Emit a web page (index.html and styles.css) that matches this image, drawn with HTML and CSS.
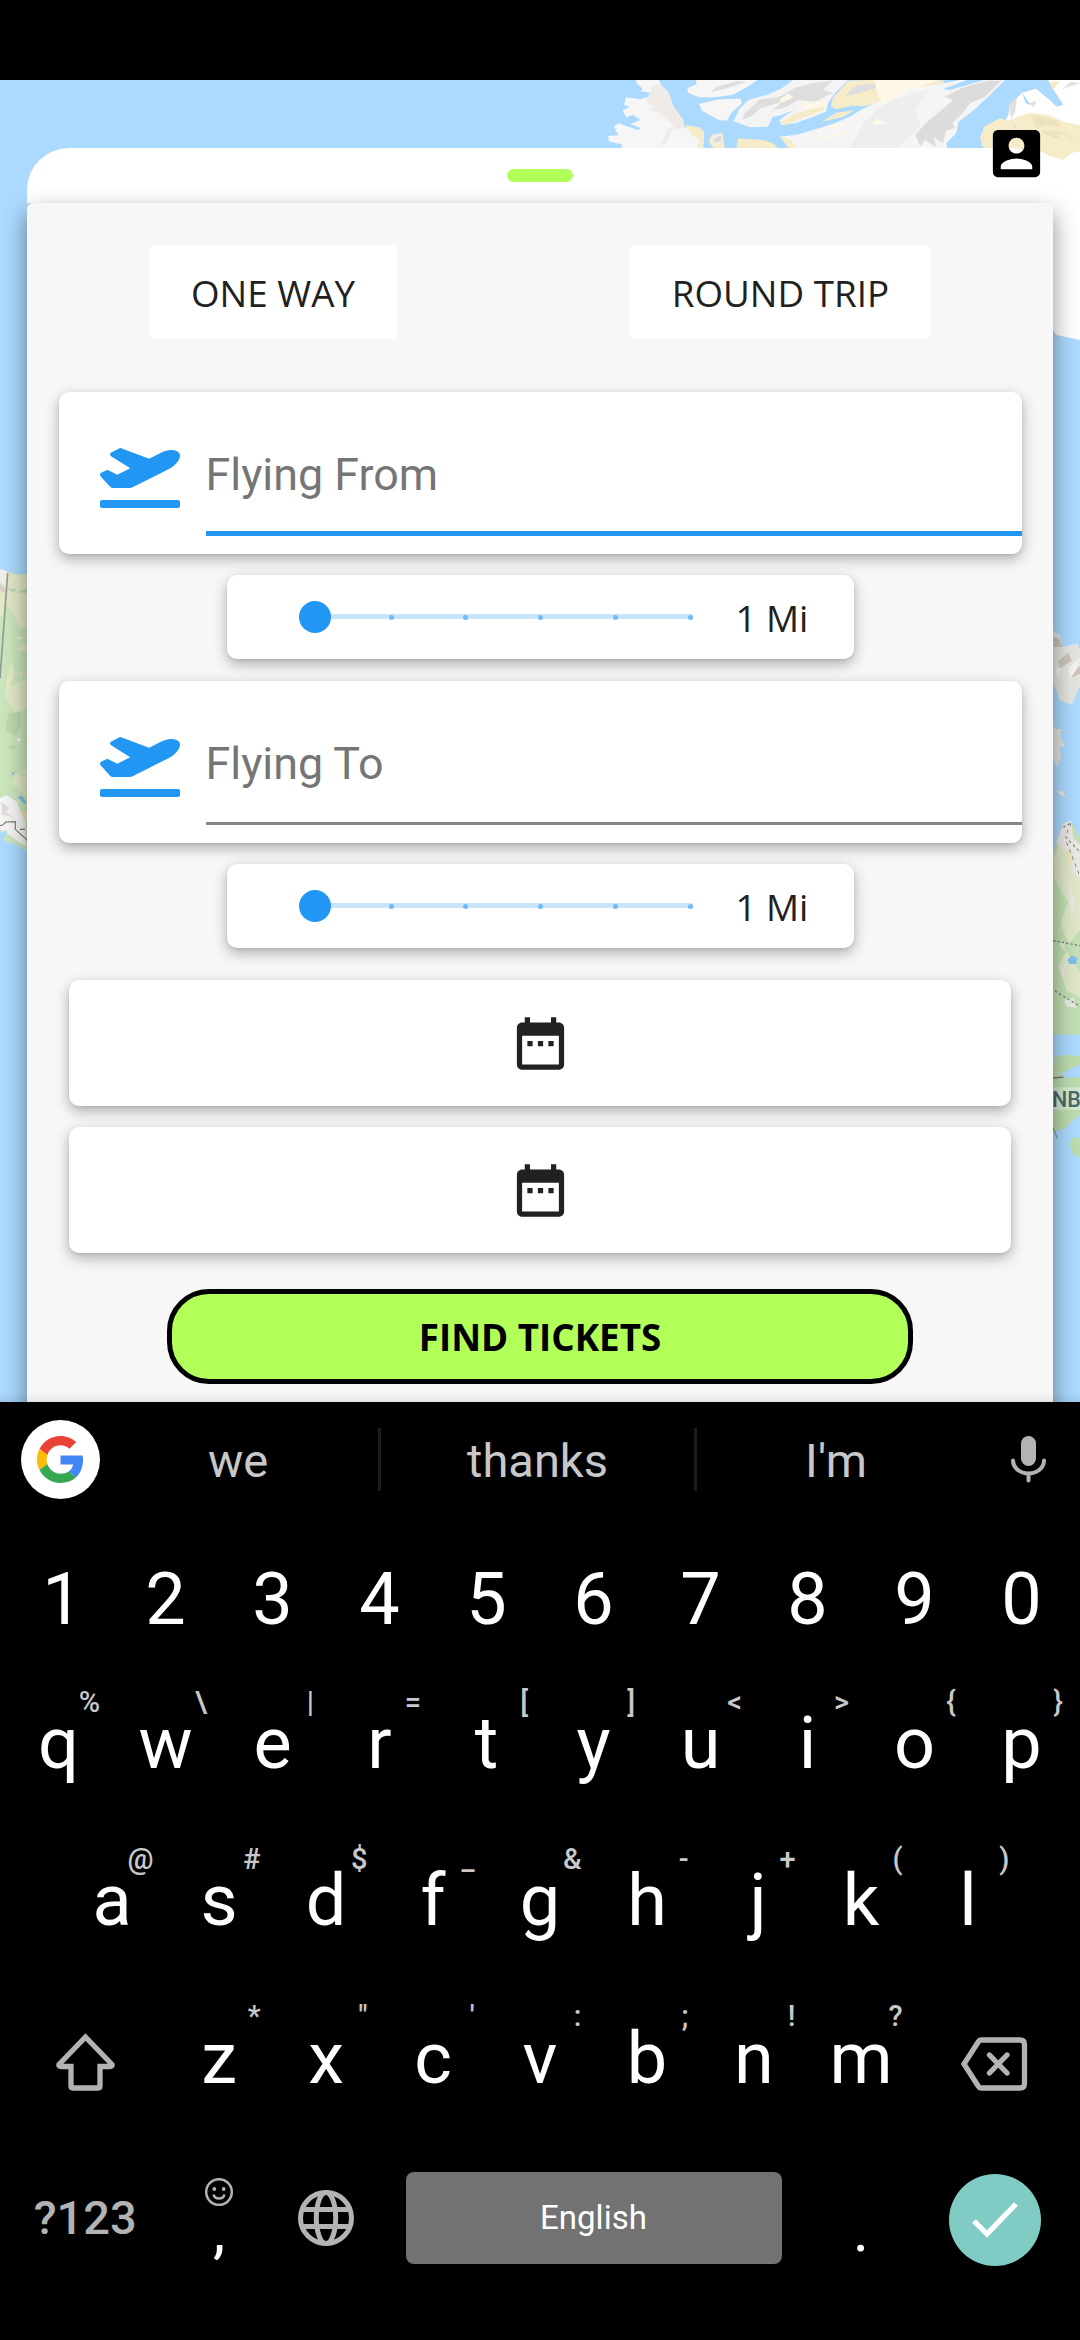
FILE: index.html
```html
<!DOCTYPE html>
<html lang="en">
<head>
<meta charset="utf-8">
<title>Flight search</title>
<link rel="stylesheet" href="styles.css">
</head>
<body>
<div class="screen">
  <div class="status-bar"></div>
  <main class="app">
    <svg class="map" viewBox="0 80 1080 1322" aria-hidden="true">
      <rect y="80" width="1080" height="1322" fill="#acdaff"/>
      <!-- northern islands -->
      <g transform="translate(540 60) scale(.34439 .33333)">
        <path fill="#f6f6f6" d="M280 60L345 60L352 78L372 95L388 140L416 180L418 200L440 212L462 202L476 215L474 264L234 264L240 254L200 244L198 228L228 226L215 200L228 190L285 210L292 204L262 192L292 180L270 165L250 172L240 150L262 142L244 134L250 112L290 118L325 108L322 98L292 94L298 86L280 70Z"/>
        <path fill="#efebe6" d="M325 78L350 72L374 98L388 140L416 180V202L400 210L370 180L342 155L316 150L330 140L308 126Z"/>
        <path fill="#efebe6" d="M370 205L388 200L366 250L352 256Z"/>
        <path fill="#f6ecca" d="M420 195L462 202L476 215L470 264L456 262L462 240L440 225Z"/>
        <path fill="#f6f6f6" d="M452 60H632L600 82L560 104L510 112H462L430 98L428 85L455 72Z"/>
        <path fill="#dedede" d="M510 82L575 62L600 66L545 84L498 96Z"/>
        <path fill="#f6f6f6" d="M462 132L520 118L582 116L586 130L556 158L543 182L520 180L470 152Z"/>
        <path fill="#f4f4f4" d="M562 184L580 145L605 120L660 104L700 86L735 60H895L860 95L838 125L830 155L790 172L740 190L700 195L696 180L716 164L740 150L700 165L675 172L662 200L610 202Z"/>
        <path fill="#dedede" d="M596 158L640 118L690 112L740 84L790 70L850 62L820 90L850 98L800 125L752 120L706 145L680 148L664 160L705 125L640 145L612 170L585 180Z"/>
        <path fill="#fff8e8" d="M695 120L720 100L735 112L700 130Z M760 130L836 122L826 140L766 148Z"/>
        <path fill="#f6ecca" d="M700 185L740 160L800 145L828 138L820 152L770 172L710 196Z M845 140L850 115L895 62L960 60H1140L1175 62L1160 85L1110 90L1050 98L985 130L940 138L905 137L860 148Z"/>
        <path fill="#dedede" d="M900 90L925 75L958 72L1010 66L980 82L930 98L890 108Z"/>
        <path fill="#f5f5f5" d="M696 230L745 224L800 208L850 192L900 170L940 145L990 122L1040 98L1110 80L1175 70L1220 60H1350L1300 112L1260 150L1216 185L1208 220L1180 250L1182 264H745L726 256Z"/>
        <path fill="#eee" d="M900 260L940 190L1000 130L1070 105L1130 90L1090 150L1105 200L1065 235L1040 264H880Z"/>
        <path fill="#fff8e8" d="M970 60H1160L1060 96L1000 134L985 118Z M800 235L900 212L860 235Z M975 177L1010 190L962 194Z M840 196L890 190L850 210Z"/>
        <path fill="#dcdcdc" d="M1090 225L1120 190L1155 160L1200 120L1175 110L1230 82L1300 62H1340L1290 112L1250 128L1230 155L1198 188L1204 205L1180 212L1170 250L1142 230L1150 262L1120 240L1104 258Z"/>
        <path fill="#f6ecca" d="M818 185L860 158L915 150L880 170Z M575 235L650 240L680 252L690 264H570Z M498 225L530 218L536 264H504L490 245Z M696 230L730 240L745 264H722Z"/>
        <path fill="#eee" d="M500 228L526 222L530 246L508 256Z"/>
        <path fill="#d5d5d5" d="M506 238L526 226V240L510 248Z"/>
        <path fill="#fff" d="M1310 264L1360 165L1365 135L1400 98L1440 86L1480 120L1500 140L1520 135L1495 95L1475 60H1568V840L1500 825L1480 800H1400V264Z"/>
        <path fill="#f6ecca" d="M1478 66L1510 62L1490 90Z M1278 232L1290 200L1335 175L1360 182L1420 158L1480 165L1520 185L1568 196V275L1545 278L1520 300L1480 288L1455 275H1310L1284 258Z"/>
        <path fill="#ece2be" d="M1428 165L1500 180L1515 202L1470 195L1442 205Z M1460 210L1530 218L1500 225L1520 242L1464 222Z"/>
        <path fill="#e3dfdc" d="M1360 135L1385 112L1380 155L1365 180L1385 200L1375 205Z M1418 130L1442 122L1435 142Z M1515 90L1540 65L1568 70L1530 82Z"/>
        <path fill="#acdaff" d="M1400 98L1425 135L1410 130Z"/>
        <path fill="#e9ecb9" d="M1510 215L1560 235L1535 240Z M785 148L802 152L790 158Z"/>
        <path fill="#acdaff" d="M1168 88L1240 60H1290L1240 75L1190 90Z"/>
      </g>
      <!-- west coast -->
      <g transform="translate(0 500) scale(.33333)">
        <path fill="#cbe6bd" d="M0 206L36 220L50 224L90 222V1058L40 1028L0 1045Z"/>
        <path fill="#e3eac8" d="M0 206L36 220L50 224L90 222V380L60 386L40 340L20 316L10 350L0 345Z M50 450L70 430L90 438V455Z M20 540L34 480L44 520L30 560L90 530V625L45 636L15 590Z M34 850L50 820L90 835V920L70 880Z M62 820L78 802L90 810V825Z"/>
        <path fill="#eee" d="M0 206L20 214L18 262L0 240Z M45 415L60 410L72 418Z"/>
        <path fill="#d8d2ca" d="M0 252L16 264L14 280L0 272Z"/>
        <path fill="#bddbb0" d="M18 265L50 266L40 278Z M50 276L90 262V280Z M25 740L40 735L52 745L30 748Z M25 640L62 636L64 670L48 710L16 690Z"/>
        <path fill="#f4dfbd" d="M56 535L62 512L72 525Z M62 930L90 935V962L75 960Z"/>
        <path fill="#f7f5f4" d="M0 895L18 885L50 905L60 930L76 965V1038L55 1025L22 1000L0 990Z M48 718L64 714L58 726Z"/>
        <path fill="#e0dcdf" d="M4 905L28 925L18 935L40 950L6 945Z"/>
        <path fill="#7dbcf1" d="M52 890L66 888L78 905L74 912Z M34 822L44 812L40 826Z"/>
        <path fill="#acdaff" d="M0 998L22 990L10 1020L50 1042L90 1060V1200H0Z"/>
        <path fill="none" stroke="#999" stroke-width="5" d="M23 219L0 535"/>
        <path fill="none" stroke="#6d7e6d" stroke-width="3.5" d="M0 977L8 975L18 966L46 965V988L90 1028 M60 988H75"/>
      </g>
      <!-- east coast -->
      <g transform="translate(1000 300) scale(.33333 .70791)">
        <path fill="#e5e5e0" d="M150 465L178 472L190 490L232 485L240 495V545L215 572L180 565L150 530Z M150 592L166 606H185L180 615L194 630L178 632L184 645L172 660L150 640Z M168 693L190 694L196 702L182 700Z"/>
        <path fill="#cdc4bd" d="M160 476L178 478L188 490L162 490Z M175 510L205 498L215 510L180 520Z M208 522L240 518V528L214 534Z"/>
        <path fill="#f3f3f1" d="M165 520L185 520L172 535Z M205 520L240 505L232 520L210 536Z"/>
        <path fill="#c2e0b4" d="M150 790L180 758L214 736L240 760V1038H150Z"/>
        <path fill="#e0e7c8" d="M160 790L190 750L240 775V890L205 910L182 880L205 850L165 820Z M175 940L200 920L240 950V985L200 975Z"/>
        <path fill="#e9e8e2" d="M168 766L190 740L214 735L220 760L240 770V820L215 805L205 780Z M205 820L225 850L215 880Z M180 945L196 938L190 960Z M178 910L190 905L196 920Z M192 990L220 985L230 1000L200 998Z"/>
        <path fill="#f0e2bb" d="M200 775L222 788L210 798Z"/>
        <path fill="#7dbcf1" d="M203 932L215 926L232 930L228 938L208 938Z"/>
        <path fill="none" stroke="#777" stroke-width="2" stroke-dasharray="6 7" d="M190 745L214 738L196 758L240 780 M200 766L240 815 M160 905L240 912 M165 976L240 998"/>
        <path fill="#acdaff" d="M150 1038H240V1068L150 1068Z"/>
        <path fill="#bcdcae" d="M150 1072L190 1066L240 1068V1150L195 1170L150 1176Z M208 1192L222 1182L240 1185V1212L218 1206Z"/>
        <path fill="#acdaff" d="M185 1092L240 1080V1098L195 1099Z"/>
        <path fill="none" stroke="#777" stroke-width="2" d="M150 1099L190 1098 M160 1170L172 1184"/>
        <path fill="#dfeede" opacity=".7" d="M160 1112H240V1144H160Z"/>
      </g>
      <text class="map-label" x="1052" y="1107">NB</text>
    </svg>

    <section class="sheet">
      <div class="sheet-top"><span class="handle"></span></div>
      <div class="panel">
        <div class="trip-types">
          <button class="trip">ONE WAY</button>
          <button class="trip">ROUND TRIP</button>
        </div>

        <label class="card field">
          <svg class="plane" viewBox="0 0 640 512"><use href="#plane-shape"/></svg>
          <span class="input focused">Flying From</span>
        </label>
        <div class="card range">
          <div class="slider"><i class="track"></i><i class="thumb"></i><i class="tick"></i><i class="tick"></i><i class="tick"></i><i class="tick"></i><i class="tick"></i></div>
          <span class="miles">1 Mi</span>
        </div>

        <label class="card field">
          <svg class="plane" viewBox="0 0 640 512"><use href="#plane-shape"/></svg>
          <span class="input">Flying To</span>
        </label>
        <div class="card range">
          <div class="slider"><i class="track"></i><i class="thumb"></i><i class="tick"></i><i class="tick"></i><i class="tick"></i><i class="tick"></i><i class="tick"></i></div>
          <span class="miles">1 Mi</span>
        </div>

        <div class="card date"><svg class="icon" viewBox="0 0 24 24"><use href="#calendar-shape"/></svg></div>
        <div class="card date"><svg class="icon" viewBox="0 0 24 24"><use href="#calendar-shape"/></svg></div>

        <button class="find">FIND TICKETS</button>
      </div>
    </section>

    <svg class="account" viewBox="0 0 24 24"><path d="M3 5v14c0 1.1.89 2 2 2h14c1.1 0 2-.9 2-2V5c0-1.1-.9-2-2-2H5c-1.11 0-2 .9-2 2zm12 4c0 1.66-1.34 3-3 3s-3-1.34-3-3 1.34-3 3-3 3 1.34 3 3zm-9 8c0-2 4-3.1 6-3.1s6 1.1 6 3.1v1H6v-1z"/></svg>
    <div class="edge-shade"></div>
  </main>

  <section class="keyboard">
    <div class="suggestions">
      <span class="google"><svg viewBox="0 0 48 48">
        <path fill="#ea4335" d="M24 9.5c3.54 0 6.71 1.22 9.21 3.6l6.85-6.85C35.9 2.38 30.47 0 24 0 14.62 0 6.51 5.38 2.56 13.22l7.98 6.19C12.43 13.72 17.74 9.5 24 9.5z"/>
        <path fill="#4285f4" d="M46.98 24.55c0-1.57-.15-3.09-.38-4.55H24v9.02h12.94c-.58 2.96-2.26 5.48-4.78 7.18l7.73 6c4.51-4.18 7.09-10.36 7.09-17.65z"/>
        <path fill="#fbbc05" d="M10.53 28.59c-.48-1.45-.76-2.99-.76-4.59s.27-3.14.76-4.59l-7.98-6.19C.92 16.46 0 20.12 0 24c0 3.88.92 7.54 2.56 10.78l7.97-6.19z"/>
        <path fill="#34a853" d="M24 48c6.48 0 11.93-2.13 15.89-5.81l-7.73-6c-2.15 1.45-4.92 2.3-8.16 2.3-6.26 0-11.57-4.22-13.47-9.91l-7.98 6.19C6.51 42.62 14.62 48 24 48z"/>
      </svg></span>
      <span class="word">we</span><span class="word">thanks</span><span class="word">I'm</span>
      <svg class="mic" viewBox="0 0 35 47"><rect x="10" width="15" height="30" rx="7.5" fill="#b3b3b3"/><path d="M2 24.500C2 32 9 37.500 17.500 37.500S33 32 33 24.500M17.500 38V44.500" fill="none" stroke="#b3b3b3" stroke-width="4" stroke-linecap="round"/></svg>
    </div>

    <div class="row numbers"><span class="key nudge">1</span><span class="key">2</span><span class="key">3</span><span class="key">4</span><span class="key">5</span><span class="key">6</span><span class="key">7</span><span class="key">8</span><span class="key">9</span><span class="key">0</span></div>
    <div class="row">
      <span class="key">q<sup>%</sup></span><span class="key">w<sup>\</sup></span><span class="key">e<sup>|</sup></span><span class="key">r<sup>=</sup></span><span class="key">t<sup>[</sup></span><span class="key">y<sup>]</sup></span><span class="key">u<sup>&lt;</sup></span><span class="key">i<sup>&gt;</sup></span><span class="key">o<sup>{</sup></span><span class="key">p<sup>}</sup></span>
    </div>
    <div class="row">
      <span class="key">a<sup>@</sup></span><span class="key">s<sup>#</sup></span><span class="key">d<sup>$</sup></span><span class="key">f<sup>_</sup></span><span class="key">g<sup>&amp;</sup></span><span class="key">h<sup>-</sup></span><span class="key nudge">j<sup>+</sup></span><span class="key">k<sup>(</sup></span><span class="key">l<sup>)</sup></span>
    </div>
    <div class="row lower">
      <span class="key wide"><svg class="shift" viewBox="0 0 59 58"><path d="M29.500 4L56 31.500Q56.500 33.500 54 33.500H44V53Q44 55 42 55H17Q15 55 15 53V33.500H5Q2.500 33.500 3 31.500Z"/></svg></span>
      <span class="key">z<sup>*</sup></span><span class="key">x<sup>"</sup></span><span class="key">c<sup>'</sup></span><span class="key">v<sup>:</sup></span><span class="key">b<sup>;</sup></span><span class="key">n<sup>!</sup></span><span class="key">m<sup>?</sup></span>
      <span class="key wide"><svg class="erase" viewBox="0 0 67 54"><path d="M20 3H59Q63.500 3 63.500 7.500V46.500Q63.500 51 59 51H20Q18.500 51 17.500 49.500L3 27L17.500 4.500Q18.500 3 20 3ZM28.500 18L46 36M46 18L28.500 36"/></svg></span>
    </div>
    <div class="row bottom">
      <span class="key wide mode">?123</span>
      <span class="key comma"><svg viewBox="0 0 28 28"><circle cx="14" cy="14" r="12.800"/><path d="M8.500 16.500Q9.500 20.500 14 20.500T19.500 16.500"/><circle class="eye" cx="9.300" cy="11" r="1.900"/><circle class="eye" cx="18.700" cy="11" r="1.900"/></svg><b>,</b></span>
      <span class="key"><svg class="globe" viewBox="0 0 56 56"><circle cx="28" cy="28" r="25.500"/><ellipse cx="28" cy="28" rx="9.700" ry="25.500"/><path d="M5 19.500H51M5 36.500H51"/></svg></span>
      <span class="space">English</span>
      <span class="key dot">.</span>
      <span class="key wide"><span class="enter"><svg viewBox="0 0 46 36"><path d="M2 19L15 32L44 2"/></svg></span></span>
    </div>
  </section>
</div>

<svg width="0" height="0" class="defs"><defs>
  <path id="plane-shape" d="M624 448H16c-8.840 0-16 7.160-16 16v32c0 8.840 7.160 16 16 16h608c8.840 0 16-7.160 16-16v-32c0-8.840-7.160-16-16-16zM80.550 341.270c6.280 6.840 15.100 10.720 24.330 10.710l130.540-.18a65.620 65.620 0 0 0 29.640-7.120l290.960-147.650c26.740-13.570 50.710-32.940 67.020-58.310 18.310-28.480 20.300-49.090 13.070-63.650-7.210-14.570-24.740-25.270-58.250-27.450-29.850-1.940-59.540 5.920-86.280 19.480l-98.510 49.990-218.700-82.060a17.799 17.799 0 0 0-18-1.110L90.620 67.290c-10.670 5.410-13.250 19.650-5.170 28.530l156.220 98.100-103.210 52.380-72.350-36.470a17.804 17.804 0 0 0-16.070.02L9.910 230.220c-10.440 5.300-13.190 19.120-5.570 28.080l76.210 82.970z"/>
  <path id="calendar-shape" d="M9 11H7v2h2v-2zm4 0h-2v2h2v-2zm4 0h-2v2h2v-2zm2-7h-1V2h-2v2H8V2H6v2H5c-1.110 0-1.990.9-1.990 2L3 20c0 1.100.89 2 2 2h14c1.100 0 2-.9 2-2V6c0-1.100-.9-2-2-2zm0 16H5V9h14v11z"/>
</defs></svg>
</body>
</html>
```
FILE: styles.css
```css
* { box-sizing: border-box; }
body { margin: 0; background: #000; }
button { font: inherit; border: 0; margin: 0; }
svg { display: block; }
.defs { position: absolute; }

.screen {
  width: 1080px;
  height: 2340px;
  display: flex;
  flex-direction: column;
  overflow: hidden;
  background: #000;
}
.status-bar { height: 80px; flex: none; }

/* ---- search screen ---- */
.app {
  position: relative;
  flex: none;
  height: 1322px;
  overflow: hidden;
  font-family: "Open Sans", sans-serif;
  font-size: 36.75px;
  color: #212121;
}
.map { position: absolute; inset: 0; width: 1080px; height: 1322px; }
.map-label { font: 500 21.5px Roboto, sans-serif; fill: #4b6b68; }
.sheet { position: relative; margin: 68px 27px 0; }
.sheet-top {
  height: 55px;
  display: flex;
  justify-content: center;
  padding-top: 21px;
  background: #fff;
  border-radius: 42px 42px 0 0;
}
.handle { width: 66px; height: 13px; border-radius: 7px; background: #b2ff59; }
.panel {
  height: 1260px;
  padding-top: 42px;
  display: flex;
  flex-direction: column;
  align-items: center;
  border-radius: 6px;
  background: #f7f7f7;
  box-shadow: 0 10px 24px rgba(0, 0, 0, .46);
}
.trip-types {
  width: 100%;
  height: 94px;
  padding: 0 122px;
  display: flex;
  justify-content: space-between;
}
.trip {
  padding: 1px 42px 0;
  height: 94px;
  line-height: 94px;
  white-space: nowrap;
  border-radius: 5px;
  background: #fff;
  color: #212121;
}
.card {
  border-radius: 10px;
  background: #fff;
  box-shadow: 0 5px 14px rgba(0, 0, 0, .3), 0 1px 3px rgba(0, 0, 0, .08);
}
.field {
  width: 963px;
  height: 162px;
  margin-top: 53px;
  display: flex;
  align-items: flex-start;
  padding-left: 41px;
  flex: none;
}
.range + .field { margin-top: 22px; }
.plane { width: 80px; height: 64px; margin-top: 52px; fill: #2196f3; }
.input {
  flex: 1;
  height: 144px;
  margin-left: 26px;
  padding-top: 57px;
  font: 44.800px/52px Roboto, sans-serif;
  color: #757575;
  background: linear-gradient(#868686, #868686) left 0 bottom 0 / 100% 3px no-repeat;
}
.input.focused { background: linear-gradient(#2196f3, #2196f3) left 0 bottom 0 / 100% 5px no-repeat; }
.range {
  width: 627px;
  height: 84px;
  margin-top: 21px;
  display: flex;
  align-items: center;
  flex: none;
}
.slider {
  position: relative;
  width: 378px;
  height: 32px;
  margin-left: 88px;
  padding-left: 74px;
  display: flex;
  align-items: center;
  justify-content: space-between;
}
.slider i { display: block; border-radius: 50%; }
.slider .track { position: absolute; left: 0; right: 0; top: 13px; height: 5px; border-radius: 3px; background: #c8e5fc; }
.slider .thumb { position: absolute; left: -16px; top: 0; width: 32px; height: 32px; background: #2196f3; }
.slider .tick { position: relative; width: 5px; height: 5px; background: #70bbf7; }
.miles { margin-left: 43px; padding-top: 2px; line-height: 84px; }
.date {
  width: 942px;
  height: 126px;
  margin-top: 32px;
  display: flex;
  align-items: center;
  justify-content: center;
  flex: none;
}
.date + .date { margin-top: 21px; }
.icon { width: 63px; height: 63px; fill: #212121; }
.find {
  width: 746px;
  height: 95px;
  margin-top: 36px;
  border: 5px solid #000;
  border-radius: 42px;
  background: #b2ff59;
  color: #000;
  font-weight: 700;
  line-height: 84px;
  padding: 1px 0 0;
  flex: none;
}
.account { position: absolute; left: 985px; top: 42px; width: 63px; height: 63px; }
.edge-shade {
  position: absolute;
  left: 0; right: 0; bottom: 0;
  height: 10px;
  background: linear-gradient(transparent, rgba(0, 0, 0, .07));
}

/* ---- keyboard ---- */
.keyboard {
  flex: none;
  height: 938px;
  background: #000;
  color: #fff;
  font-family: Roboto, sans-serif;
  font-size: 72px;
}
.suggestions { display: flex; align-items: center; height: 115px; padding-left: 21px; }
.google {
  width: 79px;
  height: 79px;
  display: flex;
  align-items: center;
  justify-content: center;
  border-radius: 50%;
  background: #fff;
}
.google svg { width: 47px; height: 47px; }
.word {
  width: 316px;
  height: 63px;
  text-align: center;
  font-size: 47px;
  line-height: 66px;
  color: #c8c8c8;
}
.google + .word { width: 278px; padding-right: 2px; }
.word + .word { border-left: 3px solid #1c1c1c; }
.word:nth-of-type(4) { width: 281px; }
.mic { width: 35px; height: 47px; margin-left: 36px; }
.row { display: flex; justify-content: center; height: 157px; line-height: 157px; }
.row.numbers { height: 131px; line-height: 131px; margin-top: 17px; }
.row.lower { line-height: 159px; }
.key { position: relative; width: 107px; text-align: center; flex: none; }
.key.nudge { padding-left: 8px; }
.key sup {
  position: absolute;
  right: 12px;
  top: 20px;
  font-size: 29px;
  font-weight: 500;
  line-height: 34px;
  color: #c8c8c8;
}
.key.wide { width: 160.500px; display: flex; align-items: center; justify-content: center; }
.key svg { fill: none; stroke: #b3b3b3; }
.shift { width: 59px; height: 58px; stroke-width: 5.300; margin-top: 8px; }
.erase { width: 67px; height: 54px; stroke-width: 5.300; stroke-linecap: round; margin-top: 13px; }
.row.bottom { height: 164px; align-items: center; line-height: 92px; }
.key.mode { font-size: 47px; font-weight: 500; color: #b3b3b3; }
.comma { height: 92px; display: flex; flex-direction: column; align-items: center; }
.comma svg { width: 28px; height: 28px; margin-top: 6px; stroke-width: 2.500; }
.comma b { font-size: 62px; font-weight: 400; line-height: 48px; margin-top: 1px; }
.comma .eye { fill: #b3b3b3; stroke: none; }
.dot { font-size: 62px; padding-top: 24px; }
.globe { width: 56px; height: 56px; margin: 0 auto; stroke-width: 5; }
.space {
  width: 376px;
  height: 92px;
  margin: 0 26px;
  border-radius: 8px;
  background: #727272;
  text-align: center;
  font-size: 33px;
  flex: none;
}
.enter {
  width: 92px;
  height: 92px;
  margin-top: 4px;
  display: flex;
  align-items: center;
  justify-content: center;
  border-radius: 50%;
  background: #80cbc4;
}
.key .enter svg { width: 46px; height: 36px; stroke: #fff; stroke-width: 5.300; }
```
